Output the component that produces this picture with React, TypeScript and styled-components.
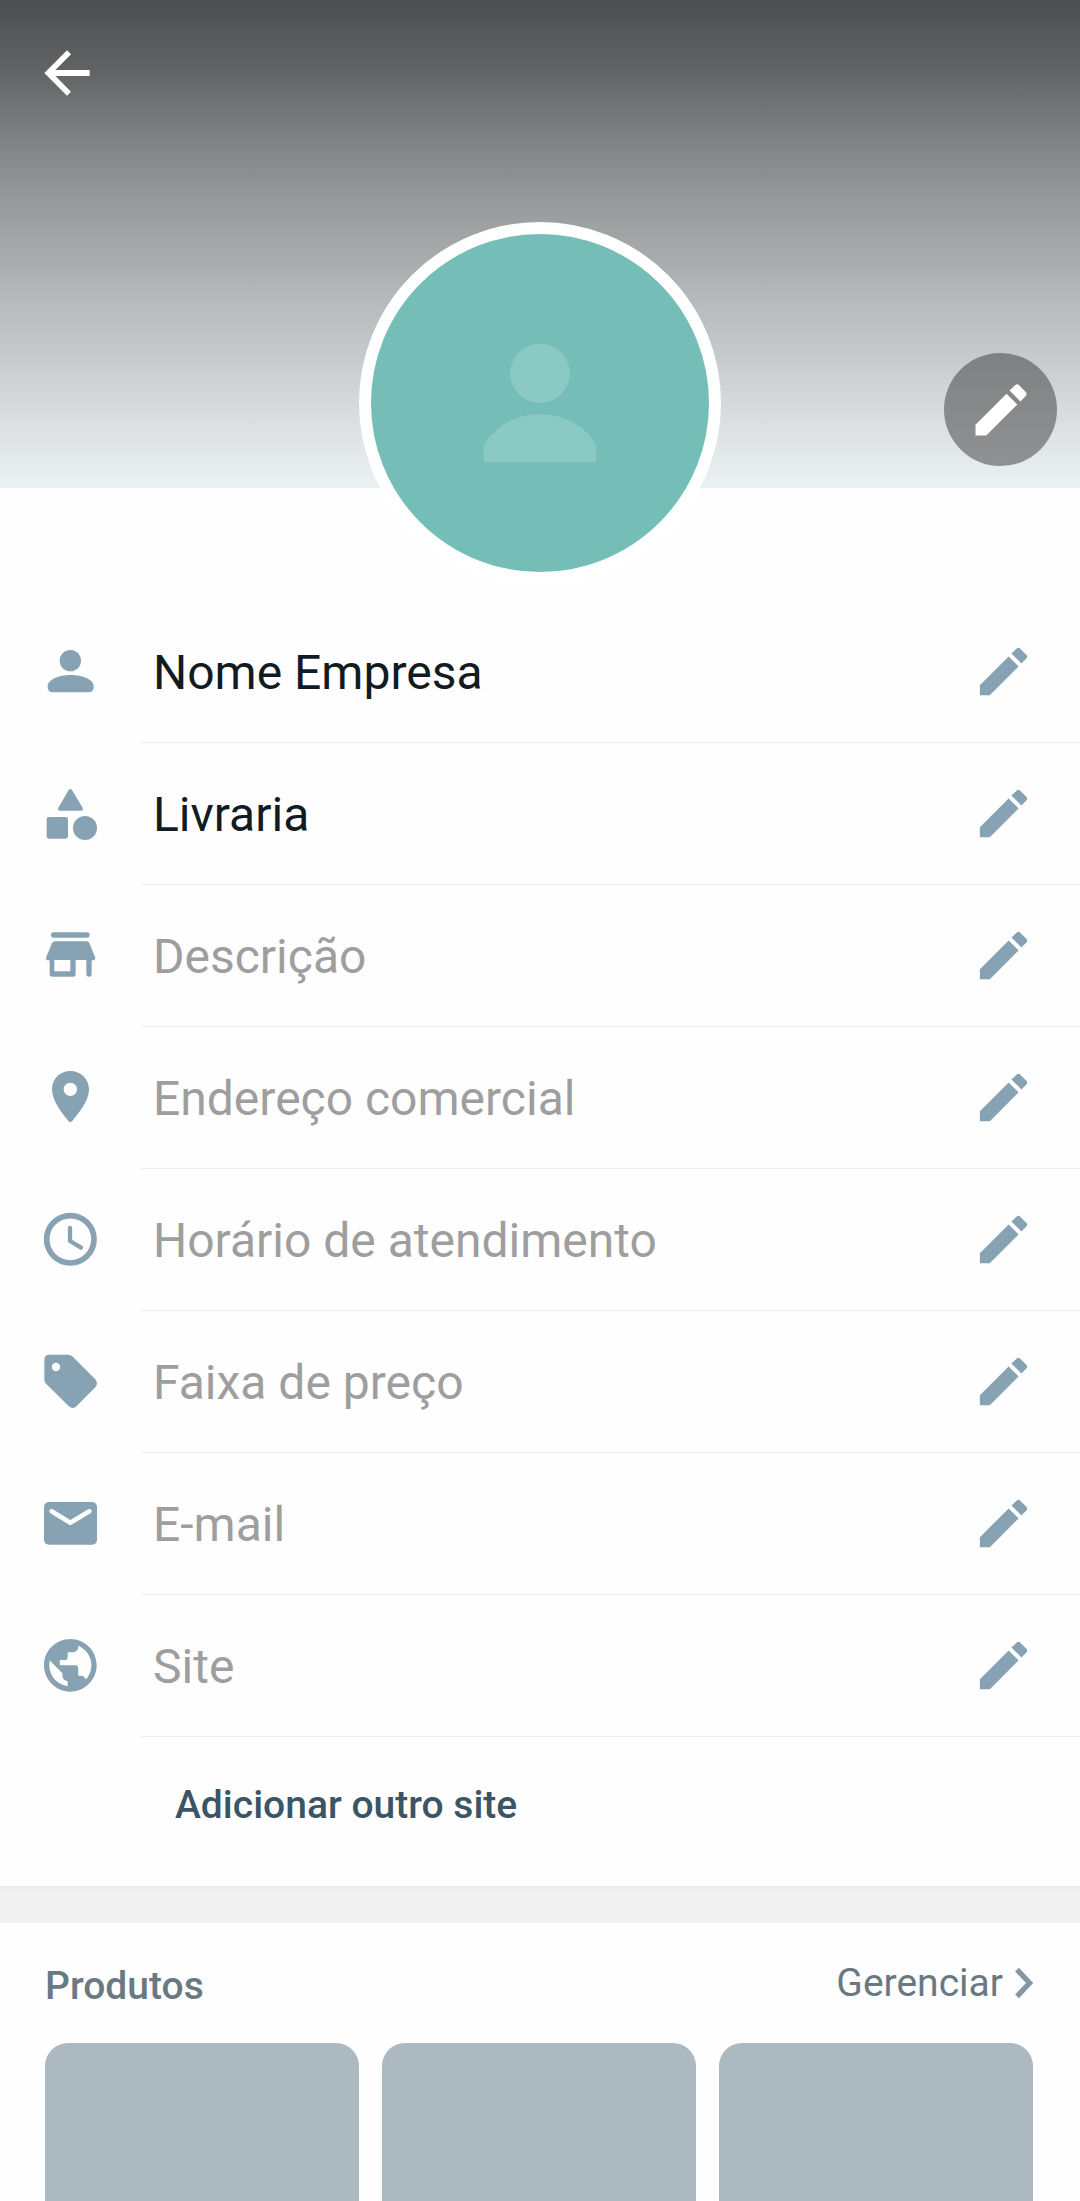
import React from "react";
import styled, { createGlobalStyle } from "styled-components";

const GlobalStyle = createGlobalStyle`
  *, *::before, *::after { box-sizing: border-box; }
  html, body, #root { margin: 0; height: 100%; }
  body {
    background: #fefefe;
    font-family: Roboto, "Noto Sans", sans-serif;
  }
`;

const Screen = styled.main`
  display: flex;
  flex-direction: column;
  height: 100%;
  min-height: 100vh;
  overflow: hidden;
`;

const Cover = styled.header`
  position: relative;
  flex: none;
  height: 488px;
  padding: 39px 33px;
  background: linear-gradient(#4d4e50 0%, #606263 14%, #787b7b 25%, #969a9a 41%, #a7aaab 52%, #b5b9bb 61%, #cacdcf 75%, #dee2e4 89%, #ebf1f3 100%);
`;

const IconButton = styled.button`
  display: flex;
  align-items: center;
  justify-content: center;
  padding: 0;
  border: 0;
  background: none;
  color: #ffffff;
  cursor: pointer;
`;

const CoverEdit = styled(IconButton)`
  position: absolute;
  right: 23px;
  bottom: 22px;
  width: 113px;
  height: 113px;
  border-radius: 50%;
  background: rgba(55, 55, 55, 0.5);
`;

const Avatar = styled.button`
  position: relative;
  flex: none;
  align-self: center;
  width: 362px;
  height: 362px;
  margin: -266px 0 17px;
  padding: 0;
  border: 12px solid #ffffff;
  border-radius: 50%;
  background: #74beb7;
  color: #8bc9c4;
  cursor: pointer;
`;

const Fields = styled.ul`
  flex: none;
  margin: 0;
  padding: 0;
  list-style: none;
`;

const Field = styled.li`
  display: flex;
`;

const FieldIcon = styled.svg`
  flex: none;
  width: 65px;
  height: 65px;
  margin: 38px;
  color: #87a3b3;
`;

const FieldBody = styled.div`
  display: flex;
  flex: 1;
  align-items: center;
  height: 142px;
  padding-left: 12px;
  border-bottom: 1px solid #ebeeee;
`;

const FieldText = styled.span<{ $empty: boolean }>`
  flex: 1;
  padding-top: 2px;
  font-size: 48px;
  line-height: 56px;
  color: ${(p) => (p.$empty ? "#9e9e9e" : "#121b22")};
`;

const FieldEdit = styled(IconButton)`
  padding: 39px 45px 39px 0;
  color: #87a3b3;
`;

const AddSite = styled.button`
  flex: none;
  align-self: flex-start;
  height: 136px;
  margin: 0 0 13px 141px;
  padding: 0 34px;
  border: 0;
  background: none;
  font-family: inherit;
  font-size: 39px;
  font-weight: 500;
  line-height: 46px;
  color: #3b5564;
  cursor: pointer;
`;

const Separator = styled.div`
  flex: none;
  height: 37px;
  border-top: 3px solid #eaecee;
  background: #f1f1f1;
`;

const Products = styled.section`
  display: flex;
  flex: 1;
  flex-direction: column;
  padding: 0 47px 0 45px;
`;

const ProductsHead = styled.div`
  display: flex;
  flex: none;
  align-items: center;
  justify-content: space-between;
  height: 120px;
`;

const ProductsTitle = styled.h2`
  margin: 0;
  padding-top: 6px;
  font-size: 39px;
  font-weight: 500;
  line-height: 46px;
  color: #687982;
`;

const Manage = styled.a`
  display: flex;
  align-items: center;
  gap: 12px;
  font-size: 39px;
  line-height: 46px;
  color: #687982;
  text-decoration: none;
`;

const Cards = styled.div`
  display: grid;
  flex: 1;
  grid-template-columns: repeat(3, 1fr);
  gap: 23px;
`;

const Card = styled.div`
  border-radius: 23px 23px 0 0;
  background: #adb9c1;
`;

const Pencil = ({ size }: { size: number }) => (
  <svg width={size} height={size} viewBox="0 0 24 24" fill="currentColor" aria-hidden="true">
    <path d="M3 17.200V21h3.800L17.750 10.050l-3.800-3.800L3 17.200zM20.710 7.040c.39-.39.39-1.020 0-1.410l-2.340-2.340a1 1 0 0 0-1.410 0l-1.950 1.850 3.850 3.850 1.850-1.950z" />
  </svg>
);

type FieldData = { text: string; empty: boolean; icon: React.ReactNode };

const fields: FieldData[] = [
  {
    text: "Nome Empresa",
    empty: false,
    icon: (
      <>
        <circle cx="97" cy="65" r="32" />
        <path d="M29 141C29 122 62 108 98 108s69 14 69 33v3q0 16-16 16H45q-16 0-16-16z" />
      </>
    ),
  },
  {
    text: "Livraria",
    empty: false,
    icon: (
      <>
        <path d="M92 27q5-6 10 0l32 53q3 9-6 9H67q-9 0-6-9z" />
        <rect x="26" y="108" width="64" height="65" rx="7" />
        <circle cx="141" cy="141" r="36" />
      </>
    ),
  },
  {
    text: "Descrição",
    empty: true,
    icon: (
      <>
        <rect x="39" y="28" width="116" height="16" rx="8" />
        <path
          fillRule="evenodd"
          d="M52 55h94q6 0 9 7l17 42q1 7-7 8h-4v41q0 8-8 8t-8-8v-42h-32v42q0 8-8 8H43q-8 0-8-8v-41h-4q-8-1-7-8l17-42q3-7 11-7zM49 111v34h48v-34z"
        />
      </>
    ),
  },
  {
    text: "Endereço comercial",
    empty: true,
    icon: (
      <path
        fillRule="evenodd"
        d="M97 18c-31 0-55 24-55 55 0 36 31 72 49 95q6 7 12 0c18-23 50-59 50-95 0-31-25-55-56-55zm0 35a20 20 0 1 1 0 40 20 20 0 0 1 0-40z"
      />
    ),
  },
  {
    text: "Horário de atendimento",
    empty: true,
    icon: (
      <g fill="none" stroke="currentColor" strokeLinecap="round" strokeLinejoin="round">
        <circle cx="97" cy="97" r="71" strokeWidth="17" />
        <path d="M96 63v39l33 20" strokeWidth="13" />
      </g>
    ),
  },
  {
    text: "Faixa de preço",
    empty: true,
    icon: (
      <path
        fillRule="evenodd"
        d="M34 17h57q7 0 12 5l69 69q10 12 0 24l-56 56q-12 12-24 0L24 104q-5-5-5-12V32q0-15 15-15zm20 24.500a12.500 12.500 0 1 0 0 25 12.500 12.500 0 0 0 0-25z"
      />
    ),
  },
  {
    text: "E-mail",
    empty: true,
    icon: (
      <>
        <rect x="18" y="33" width="159" height="128" rx="15" />
        <path d="M41 61l56 34 57-34" fill="none" stroke="#fefefe" strokeWidth="14" strokeLinecap="round" strokeLinejoin="round" />
      </>
    ),
  },
  {
    text: "Site",
    empty: true,
    icon: (
      <path
        transform="translate(2.2 2.2) scale(7.9)"
        d="M12 2C6.480 2 2 6.480 2 12s4.480 10 10 10 10-4.480 10-10S17.520 2 12 2zm-1 17.930c-3.950-.49-7-3.850-7-7.930 0-.62.08-1.210.21-1.790L9 15v1c0 1.100.9 2 2 2v1.930zm6.900-2.540c-.26-.81-1-1.390-1.900-1.390h-1v-3c0-.55-.45-1-1-1H8v-2h2c.55 0 1-.45 1-1V7h2c1.100 0 2-.9 2-2v-.41c2.930 1.190 5 4.060 5 7.410 0 2.080-.8 3.970-2.100 5.390z"
      />
    ),
  },
];

export default function App() {
  return (
    <>
      <GlobalStyle />
      <Screen>
        <Cover>
          <IconButton type="button" aria-label="Voltar">
            <svg width="68" height="68" viewBox="0 0 24 24" fill="currentColor" aria-hidden="true">
              <path d="M20 10.900H7.930l5.490-5.490L12 4l-8 8 8 8 1.410-1.410L7.930 13.100H20v-2.200z" />
            </svg>
          </IconButton>
          <CoverEdit type="button" aria-label="Editar capa">
            <Pencil size={68} />
          </CoverEdit>
        </Cover>
        <Avatar type="button" aria-label="Foto do perfil">
          <svg width="338" height="338" viewBox="0 0 1014 1014" fill="currentColor" aria-hidden="true">
            <circle cx="507" cy="418" r="89" />
            <path d="M338 634C372 575 434 541 507 541s135 34 169 93v51H338z" />
          </svg>
        </Avatar>

        <Fields>
          {fields.map((field) => (
            <Field key={field.text}>
              <FieldIcon viewBox="0 0 195 195" fill="currentColor" aria-hidden="true">
                {field.icon}
              </FieldIcon>
              <FieldBody>
                <FieldText $empty={field.empty}>{field.text}</FieldText>
                <FieldEdit type="button" aria-label={`Editar ${field.text}`}>
                  <Pencil size={63} />
                </FieldEdit>
              </FieldBody>
            </Field>
          ))}
        </Fields>
        <AddSite type="button">Adicionar outro site</AddSite>

        <Separator />

        <Products>
          <ProductsHead>
            <ProductsTitle>Produtos</ProductsTitle>
            <Manage href="#produtos">
              Gerenciar
              <svg width="18" height="32" viewBox="0 0 54 96" fill="none" stroke="#8797a1" strokeWidth="16" aria-hidden="true">
                <path d="M6 8l38 40L6 88" />
              </svg>
            </Manage>
          </ProductsHead>
          <Cards id="produtos">
            <Card />
            <Card />
            <Card />
          </Cards>
        </Products>
      </Screen>
    </>
  );
}
